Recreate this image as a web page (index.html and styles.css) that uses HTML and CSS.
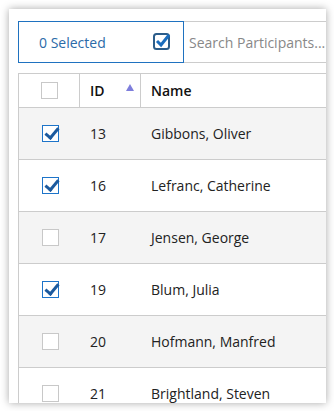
FILE: index.html
```html
<!DOCTYPE html>
<html lang="en">
<head>
  <meta charset="UTF-8">
  <meta name="viewport" content="width=device-width, initial-scale=1.0">
  <title>Participants</title>
  <link rel="stylesheet" href="styles.css">
</head>
<body>
  <div class="panel">
    <div class="toolbar">
      <div class="selected">
        <span>0 Selected</span>
        <svg class="sel-icon" width="20" height="20" viewBox="0 0 20 20">
          <rect x="2" y="3" width="15" height="15" rx="2.5" fill="none" stroke="#2c5d8a" stroke-width="2"/>
          <path d="M5 10 L9 14 L17 4" fill="none" stroke="#1b6dbd" stroke-width="3"/>
        </svg>
      </div>
      <div class="search">Search Participants...</div>
    </div>

    <div class="table">
      <div class="row head">
        <div class="cell c-check"><span class="box"></span></div>
        <div class="cell c-id">ID <span class="sort"></span></div>
        <div class="cell c-name">Name</div>
      </div>
      <div class="row odd">
        <div class="cell c-check"><span class="box on"></span></div>
        <div class="cell c-id">13</div>
        <div class="cell c-name">Gibbons, Oliver</div>
      </div>
      <div class="row">
        <div class="cell c-check"><span class="box on"></span></div>
        <div class="cell c-id">16</div>
        <div class="cell c-name">Lefranc, Catherine</div>
      </div>
      <div class="row odd">
        <div class="cell c-check"><span class="box"></span></div>
        <div class="cell c-id">17</div>
        <div class="cell c-name">Jensen, George</div>
      </div>
      <div class="row">
        <div class="cell c-check"><span class="box on"></span></div>
        <div class="cell c-id">19</div>
        <div class="cell c-name">Blum, Julia</div>
      </div>
      <div class="row odd">
        <div class="cell c-check"><span class="box"></span></div>
        <div class="cell c-id">20</div>
        <div class="cell c-name">Hofmann, Manfred</div>
      </div>
      <div class="row">
        <div class="cell c-check"><span class="box"></span></div>
        <div class="cell c-id">21</div>
        <div class="cell c-name">Brightland, Steven</div>
      </div>
    </div>
  </div>
</body>
</html>
```

FILE: styles.css
```css
body {
  font-family: 'Open Sans', sans-serif;
  font-size: 14px;
  color: #222;
  margin: 0;
  padding: 9px;
  background: #fff;
}

.panel {
  width: 317px;
  height: 394px;
  padding: 12px 0 0 9px;
  box-sizing: border-box;
  background: #fff;
  box-shadow: 0 0 8px rgba(0, 0, 0, 0.35);
  overflow: hidden;
}

.toolbar {
  display: flex;
  height: 42px;
  width: 400px;
}

.selected {
  display: flex;
  align-items: center;
  justify-content: space-between;
  width: 166px;
  box-sizing: border-box;
  border: 1px solid #1f72c0;
  padding: 0 11px 0 20px;
  color: #2b6aa8;
}

.sel-icon {
  display: block;
  margin-top: -2px;
}

.search {
  flex: 1;
  display: flex;
  align-items: center;
  border: 1px solid #ccc;
  border-left: none;
  padding-left: 5px;
  color: #888;
}

.table {
  margin-top: 10px;
  width: 400px;
  border: 1px solid #ccc;
  border-right: none;
}

.row {
  display: flex;
  height: 52px;
  box-sizing: border-box;
  border-top: 1px solid #ccc;
  background: #fff;
}

.row.head {
  height: 33px;
  border-top: none;
}

.row.odd {
  background: #f4f4f4;
}

.cell {
  display: flex;
  align-items: center;
}

.c-check {
  width: 61px;
  justify-content: center;
  padding-left: 1px;
  box-sizing: border-box;
}

.c-id {
  width: 61px;
  padding-left: 10px;
  box-sizing: border-box;
  position: relative;
}

.c-name {
  padding-left: 10px;
}

.head .cell {
  font-weight: 600;
  color: #111;
}

.head .c-check,
.head .c-id {
  border-right: 1px solid #ccc;
}

.sort {
  position: absolute;
  right: 6px;
  top: 10px;
  width: 0;
  height: 0;
  border-left: 4px solid transparent;
  border-right: 4px solid transparent;
  border-bottom: 7px solid #7e7edc;
}

.box {
  display: block;
  width: 17px;
  height: 17px;
  box-sizing: border-box;
  border: 1px solid #c8c8c8;
  background: #fff;
  position: relative;
}

.box.on {
  border-color: #1d74c9;
}

.box.on::after {
  content: "";
  position: absolute;
  left: 5px;
  top: -1px;
  width: 5px;
  height: 11px;
  border-right: 3px solid #1c5a9e;
  border-bottom: 3px solid #1c5a9e;
  transform: rotate(40deg);
}
```
